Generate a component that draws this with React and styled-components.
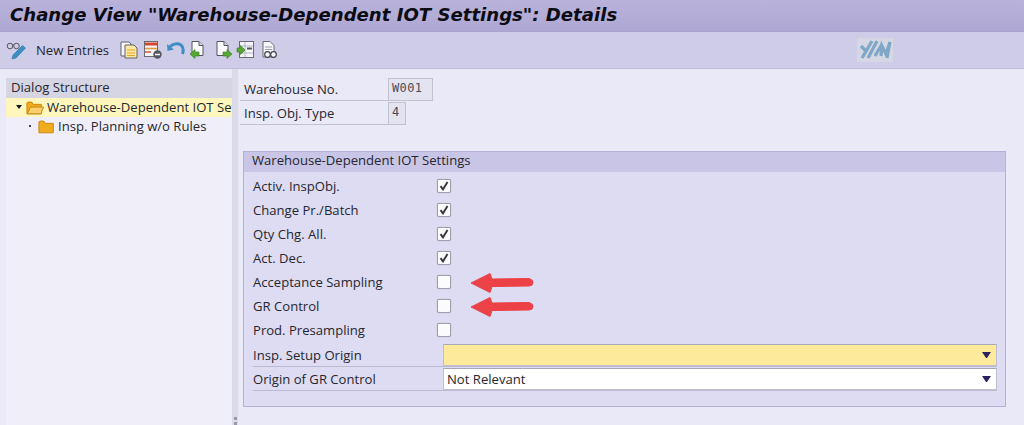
import styled, { createGlobalStyle } from "styled-components";

const GlobalStyle = createGlobalStyle`
    html, body {
        margin: 0;
        padding: 0;
        background: #e9e8f6;
    }
`;

const Page = styled.div`
    width: 1024px;
    height: 425px;
    overflow: hidden;
    display: flex;
    flex-direction: column;
    background: #eae9f7;
    color: #26262e;
    font-family: "Open Sans", "Noto Sans", sans-serif;
    font-size: 13.1px;
`;

const TitleBar = styled.div`
    height: 32px;
    box-sizing: border-box;
    padding: 3px 0 0 10px;
    background: linear-gradient(#b9b3db, #aea7d3);
    border-bottom: 1px solid #a8a2cc;
    flex: none;
`;

const Title = styled.h1`
    margin: 0;
    font-family: "DejaVu Sans", sans-serif;
    font-size: 18.1px;
    font-weight: bold;
    font-style: italic;
    line-height: 24px;
    color: #0c0c14;
    white-space: nowrap;
`;

const Toolbar = styled.div`
    height: 37px;
    flex: none;
    box-sizing: border-box;
    display: flex;
    align-items: center;
    padding-left: 6px;
    background: #cfcce8;
    border-bottom: 1px solid #bfbcd8;
`;

const ToolIcon = styled.svg`
    width: 20px;
    height: 20px;
    flex: none;
    margin-left: ${(p) => p.$gap ?? 3}px;
`;

const ToolText = styled.span`
    margin-left: 10px;
    font-size: 13.1px;
    white-space: nowrap;
`;

const Logo = styled.svg`
    width: 36px;
    height: 24px;
    margin-left: auto;
    margin-right: 131px;
    flex: none;
`;

const Body = styled.div`
    flex: 1;
    display: flex;
    min-height: 0;
`;

const TreePanel = styled.div`
    width: 226px;
    margin: 9px 0 0 6px;
    flex: none;
    overflow: hidden;
    background: #f0eff9;
`;

const TreeHeader = styled.div`
    height: 20px;
    line-height: 19px;
    padding-left: 5px;
    background: #d6d5e3;
    white-space: nowrap;
`;

const TreeRow = styled.div`
    height: 19px;
    box-sizing: border-box;
    display: flex;
    align-items: center;
    white-space: nowrap;
    padding-left: ${(p) => p.$indent}px;
    padding-bottom: 1px;
    background: ${(p) => (p.$selected ? "#fdf6bd" : "transparent")};
`;

const TreeLabel = styled.span`
    flex: 1;
    min-width: 0;
    overflow: hidden;
`;

const Expander = styled.span`
    width: 0;
    height: 0;
    margin: 0 4px 0 0;
    border-left: 3.5px solid transparent;
    border-right: 3.5px solid transparent;
    border-top: 4px solid #15151c;
`;

const Dot = styled.span`
    width: 2px;
    height: 2px;
    margin-right: 7px;
    background: #444;
`;

const FolderIcon = styled.svg`
    width: 18px;
    height: 15px;
    margin-right: ${(p) => p.$gap}px;
    flex: none;
`;

const Splitter = styled.div`
    width: 6px;
    flex: none;
    display: flex;
    flex-direction: column;
    justify-content: flex-end;
    align-items: center;
    gap: 2px;
    background: #dcdbea;
`;

const Grip = styled.span`
    width: 3px;
    height: 3px;
    background: #9a99ab;
`;

const Main = styled.div`
    flex: 1;
    position: relative;
    padding: 9px 18px 0 2px;
    min-width: 0;
`;

const HeadRow = styled.div`
    display: flex;
    height: 24px;
`;

const HeadLabel = styled.div`
    width: 144px;
    height: 22px;
    line-height: 22px;
    padding-left: 4px;
    border-bottom: 1px solid #c3c2d4;
    white-space: nowrap;
`;

const ReadOnly = styled.div`
    height: 23px;
    width: ${(p) => p.$w}px;
    box-sizing: border-box;
    border: 1px solid #c2c1d0;
    background: #e4e3f0;
    font-family: "DejaVu Sans Mono", "Liberation Mono", monospace;
    font-size: 12px;
    line-height: 19px;
    padding-left: 3px;
    letter-spacing: 0.4px;
    color: #4c4c58;
`;

const Group = styled.section`
    margin: 25px 0 0 3px;
    height: 256px;
    box-sizing: border-box;
    border: 1px solid #b4b1d6;
    background: #dedcf2;
`;

const GroupTitle = styled.div`
    height: 20px;
    line-height: 16px;
    padding-left: 8px;
    background: #c8c5e6;
`;

const GroupBody = styled.div`
    padding: 2px 8px 0 9px;
`;

const CheckRow = styled.div`
    height: 24px;
    display: flex;
    align-items: center;
`;

const FieldLabel = styled.div`
    width: 184px;
    flex: none;
    white-space: nowrap;
`;

const Check = styled.span`
    width: 14px;
    height: 14px;
    box-sizing: border-box;
    border: 1px solid #a0a0ac;
    border-radius: 2px;
    background: #fbfbfe;
    box-shadow: 0 0 1px #8f8e9c;
    display: flex;
    align-items: center;
    justify-content: center;
`;

const SelectList = styled.div`
    margin-top: 1px;
`;

const SelectRow = styled.div`
    height: 23px;
    display: flex;
    align-items: center;
    border-bottom: 1px solid #bcbad2;
`;

const SelectLabel = styled(FieldLabel)`
    width: 190px;
`;

const Select = styled.div`
    flex: 1;
    height: 22px;
    box-sizing: border-box;
    display: flex;
    align-items: center;
    justify-content: space-between;
    padding: 0 5px 0 3px;
    background: ${(p) => (p.$required ? "#fdeb9b" : "#ffffff")};
    border: 1px solid #c0bfcf;
    border-top-color: #a9a8b6;
`;

const Caret = styled.span`
    width: 9px;
    height: 0;
    box-sizing: border-box;
    border-left: 4.5px solid transparent;
    border-right: 4.5px solid transparent;
    border-top: 6px solid #2b2360;
`;

const Arrow = styled.svg`
    position: absolute;
    left: 231px;
    top: ${(p) => p.$top}px;
    width: 66px;
    height: 24px;
`;

const Tick = () => (
    <svg width="10" height="10" viewBox="0 0 10 10">
        <path d="M1.5 5.2 L4 8.4 L8.5 1" fill="none" stroke="#33333a" strokeWidth="1.9" />
    </svg>
);

const Folder = ({ open, gap }) => (
    <FolderIcon $gap={gap} viewBox="0 0 20 16">
        <path d="M1 3 L1 15 L17 15 L17 4.5 L8 4.5 L6.5 2 L2 2 Z" fill="#f0ac1c" stroke="#c5820c" strokeWidth="1" />
        {open && <path d="M1.5 15 L5 7.5 L19.5 7.5 L16.5 15 Z" fill="#fbcf6b" stroke="#c5820c" strokeWidth="1" />}
    </FolderIcon>
);

const Page2 = ({ children }) => (
    <>
        <path d="M3 1.5 H10 L14 5.5 V15.5 H3 Z" fill="#fbfbfd" stroke="#55555f" strokeWidth="1" />
        <path d="M10 1.5 V5.5 H14" fill="#dddde5" stroke="#55555f" strokeWidth="1" />
        {children}
    </>
);

const GreenLeft = () => <path d="M1 14 L6 9.5 V12 H10 V16 H6 V18.5 Z" fill="#58a834" stroke="#2f7a1a" strokeWidth="0.6" />;
const GreenRight = () => <path d="M18 14 L13 9.5 V12 H9 V16 H13 V18.5 Z" fill="#58a834" stroke="#2f7a1a" strokeWidth="0.6" />;

const tools = [
    {
        gap: 10,
        draw: (
            <>
                <path d="M2 2 H10 L12 4 V16 H2 Z" fill="#f6f6fa" stroke="#60606c" />
                <path d="M6 5 H15 L18 8 V18 H6 Z" fill="#fbe8a4" stroke="#60606c" />
                <path d="M8 10 H16 M8 13 H16 M8 15.5 H16" stroke="#e0a82a" />
            </>
        ),
    },
    {
        gap: 4,
        draw: (
            <>
                <rect x="1.5" y="1.5" width="13" height="15" fill="#f6f6fa" stroke="#6a6a74" />
                <path d="M2 4 H14" stroke="#d2492c" strokeWidth="3" />
                <path d="M2 8.5 H14" stroke="#e09a3a" strokeWidth="1.6" />
                <path d="M2 12 H8" stroke="#d2492c" strokeWidth="1.4" />
                <circle cx="14.5" cy="14.5" r="4.2" fill="#55555f" />
                <path d="M12 14.5 H17" stroke="#fff" strokeWidth="1.5" />
            </>
        ),
    },
    {
        gap: 3,
        draw: (
            <>
                <path d="M4 6.5 Q10 2 15 5 Q18.5 8 16.5 14" fill="none" stroke="#3d8fc4" strokeWidth="3" />
                <path d="M1 4 L1.5 11 L8 9.5 Z" fill="#3d8fc4" />
            </>
        ),
    },
    {
        gap: 3,
        draw: (
            <Page2>
                <GreenLeft />
            </Page2>
        ),
    },
    {
        gap: 5,
        draw: (
            <Page2>
                <GreenRight />
            </Page2>
        ),
    },
    {
        gap: 2,
        draw: (
            <>
                <rect x="3.5" y="1.5" width="14" height="16" fill="#f6f6fa" stroke="#6a6a74" />
                <path d="M9 2 V17 M4 6 H17 M4 13 H17" stroke="#b5b5c0" />
                <path d="M11 8.5 H16" stroke="#55555f" strokeWidth="2" />
                <path d="M9 10 L4.5 5.5 V8 H1 V12 H4.5 V14.5 Z" fill="#58a834" stroke="#2f7a1a" strokeWidth="0.6" />
            </>
        ),
    },
    {
        gap: 4,
        draw: (
            <>
                <path d="M3 1.5 H10 L14 5.5 V17 H3 Z" fill="#f6f6fa" stroke="#6a6a74" />
                <path d="M5 7 H12 M5 9.5 H12" stroke="#9c9ca8" />
                <circle cx="7.5" cy="14.5" r="2.8" fill="#f6f6fa" stroke="#44444e" strokeWidth="1.2" />
                <circle cx="13.5" cy="14.5" r="2.8" fill="#f6f6fa" stroke="#44444e" strokeWidth="1.2" />
            </>
        ),
    },
];

const checks = [
    ["Activ. InspObj.", true],
    ["Change Pr./Batch", true],
    ["Qty Chg. All.", true],
    ["Act. Dec.", true],
    ["Acceptance Sampling", false],
    ["GR Control", false],
    ["Prod. Presampling", false],
];

const RedArrow = ({ top }) => (
    <Arrow $top={top} viewBox="0 0 66 24">
        <path
            d="M2 12 L21 2.5 L23 8 L60 7.5 Q64 8.5 64 11.5 Q64 15 60 15 L23 15.5 L21 21.5 Z"
            fill="#ec4146"
            stroke="#ec4146"
            strokeLinejoin="round"
        />
    </Arrow>
);

function App() {
    return (
        <Page>
            <GlobalStyle />
            <TitleBar>
                <Title>Change View "Warehouse-Dependent IOT Settings": Details</Title>
            </TitleBar>
            <Toolbar>
                <ToolIcon $gap={0} viewBox="0 0 20 20">
                    <circle cx="4" cy="6" r="2.8" fill="none" stroke="#55555f" />
                    <circle cx="10.5" cy="6" r="2.8" fill="none" stroke="#55555f" />
                    <path d="M6.5 5 Q7.2 4.5 8 5" fill="none" stroke="#55555f" />
                    <path d="M7 15 L16.5 5.5 L19.5 8 L10 18 L6 19 Z" fill="#3d8fc4" stroke="#2c6f9e" strokeWidth="0.6" />
                </ToolIcon>
                <ToolText>New Entries</ToolText>
                {tools.map((t, i) => (
                    <ToolIcon key={i} $gap={t.gap} viewBox="0 0 20 20">
                        {t.draw}
                    </ToolIcon>
                ))}
                <Logo viewBox="0 0 36 24">
                    <rect width="36" height="24" fill="#d6d7e4" />
                    <g style={{ filter: "blur(0.6px)" }} fill="none" stroke="#7fa8c6" strokeWidth="3.2">
                        <path d="M4 8 L8 12 M15 3 L5 20 M20 3 L11 20 M18 18 L25 6 M24 18 L25 8 L29 16 L33 4 L30 20" />
                    </g>
                </Logo>
            </Toolbar>
            <Body>
                <TreePanel>
                    <TreeHeader>Dialog Structure</TreeHeader>
                    <TreeRow $selected $indent={10}>
                        <Expander />
                        <Folder open gap={3} />
                        <TreeLabel>Warehouse-Dependent IOT Settings</TreeLabel>
                    </TreeRow>
                    <TreeRow $indent={23}>
                        <Dot />
                        <Folder gap={2} />
                        <TreeLabel>Insp. Planning w/o Rules</TreeLabel>
                    </TreeRow>
                </TreePanel>
                <Splitter>
                    <Grip />
                    <Grip />
                </Splitter>
                <Main>
                    <HeadRow>
                        <HeadLabel>Warehouse No.</HeadLabel>
                        <ReadOnly $w={45}>W001</ReadOnly>
                    </HeadRow>
                    <HeadRow>
                        <HeadLabel>Insp. Obj. Type</HeadLabel>
                        <ReadOnly $w={18}>4</ReadOnly>
                    </HeadRow>
                    <Group>
                        <GroupTitle>Warehouse-Dependent IOT Settings</GroupTitle>
                        <GroupBody>
                            {checks.map(([label, on]) => (
                                <CheckRow key={label}>
                                    <FieldLabel>{label}</FieldLabel>
                                    <Check>{on && <Tick />}</Check>
                                </CheckRow>
                            ))}
                            <SelectList>
                                <SelectRow>
                                    <SelectLabel>Insp. Setup Origin</SelectLabel>
                                    <Select $required>
                                        <span />
                                        <Caret />
                                    </Select>
                                </SelectRow>
                                <SelectRow>
                                    <SelectLabel>Origin of GR Control</SelectLabel>
                                    <Select>
                                        <span>Not Relevant</span>
                                        <Caret />
                                    </Select>
                                </SelectRow>
                            </SelectList>
                        </GroupBody>
                    </Group>
                    <RedArrow top={202} />
                    <RedArrow top={226} />
                </Main>
            </Body>
        </Page>
    );
}

export default App;
